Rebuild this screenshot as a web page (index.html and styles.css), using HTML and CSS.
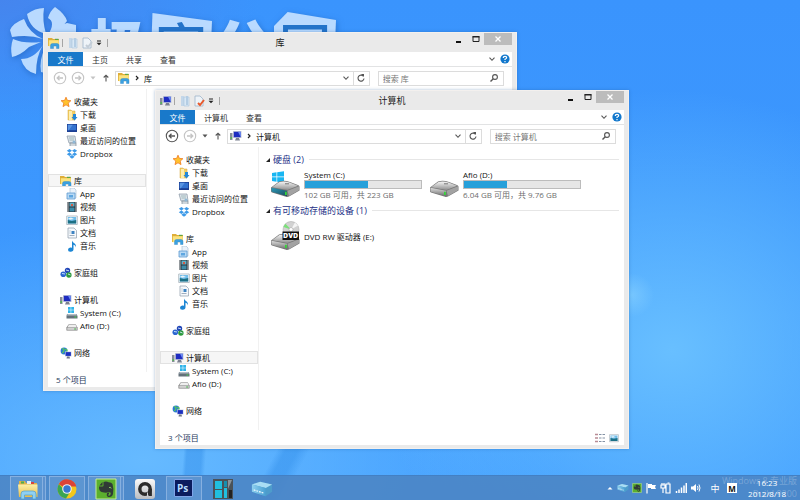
FILE: index.html
```html
<!DOCTYPE html>
<html lang="zh-CN">
<head>
<meta charset="utf-8">
<title>计算机</title>
<link rel="stylesheet" href="styles.css">
</head>
<body>
<svg class="sprite" aria-hidden="true">
  <defs>
    <linearGradient id="metal" x1="0" y1="0" x2="0" y2="1"><stop offset="0" stop-color="#f4f4f4"/><stop offset="1" stop-color="#8f8f8f"/></linearGradient>
    <linearGradient id="front" x1="0" y1="0" x2="0" y2="1"><stop offset="0" stop-color="#dcdcdc"/><stop offset="1" stop-color="#6d6d6d"/></linearGradient>
    <linearGradient id="teal" x1="0" y1="0" x2="1" y2="1"><stop offset="0" stop-color="#2b9ab8"/><stop offset="1" stop-color="#1d4a5c"/></linearGradient>
    <linearGradient id="gold" x1="0" y1="0" x2="0" y2="1"><stop offset="0" stop-color="#fdf0a8"/><stop offset="1" stop-color="#e8bd4a"/></linearGradient>
    <linearGradient id="silver" x1="0" y1="0" x2="0" y2="1"><stop offset="0" stop-color="#fafafa"/><stop offset="1" stop-color="#b9bcc0"/></linearGradient>
    <linearGradient id="box" x1="0" y1="0" x2="1" y2="0"><stop offset="0" stop-color="#8fd0ef"/><stop offset="1" stop-color="#4aa0d2"/></linearGradient>
  </defs>
  <symbol id="i-library" viewBox="0 0 12 12"><path d="M0 1h4l1 1h6v7H0z" fill="#dfae38"/><path d="M.8 3.200h10v6H.8z" fill="#fbe37e"/><path d="M7 1.800h3.500V3H7z" fill="#5fa544"/><path d="M2.500 11.500V8.500q0-2 2-2h4.500q2 0 2 2v3H8.500V9h-3v2.500z" fill="#3ba0e0" stroke="#2a86c4" stroke-width=".4"/></symbol>
  <symbol id="i-folder" viewBox="0 0 10 12"><path d="M1 1h3v10H1z" fill="#c3d7ea"/><path d="M4 2h5v9H4z" fill="#d9e8f5" stroke="#a9c3dc" stroke-width=".6"/><path d="M6 1h2v9H6z" fill="#b4cde4"/></symbol>
  <symbol id="i-props" viewBox="0 0 12 12"><path d="M2 1h5l3 3v7H2z" fill="#eef3f8" stroke="#9eb4c9" stroke-width=".8"/><path d="M5 8l2 2 4-5" fill="none" stroke="currentColor" stroke-width="2"/></symbol>
  <symbol id="i-pc" viewBox="0 0 12 12"><path d="M0 3h2.500v7H0z" fill="#888d99"/><path d="M.6 7h1.200v2H.6z" fill="#4bbf4b"/><path d="M3 1h8.500v7H3z" fill="#c5cad8"/><path d="M3.800 1.800h7v5.400h-7z" fill="#1e2cc0"/><path d="M8 1.800h2.800v5.400z" fill="#6f8ff2"/><path d="M6 8h3l1 2.500H5z" fill="#7b8090"/></symbol>
  <symbol id="i-star" viewBox="0 0 12 12"><path d="M6 1.200l1.400 3.200 3.500.3-2.700 2.400.8 3.500L6 8.800l-3 1.800.8-3.500-2.700-2.400 3.500-.3z" fill="#ffc22e" stroke="#ef7a1c" stroke-width=".8"/></symbol>
  <symbol id="i-download" viewBox="0 0 12 12"><path d="M2 1h3l1 1h3v9H2z" fill="#f3cf66" stroke="#d6a63b" stroke-width=".5"/><path d="M3 2h3v9H3z" fill="#fdeeb0"/><path d="M7 5h3v3h1.500L8.500 11.600 5.500 8H7z" fill="#2488d8"/></symbol>
  <symbol id="i-desktop" viewBox="0 0 12 12"><path d="M1 2h10v8H1z" fill="#1c3f93"/><path d="M1.800 2.800h8.400v5.400H1.800z" fill="#3473cf"/><path d="M1.800 2.800h5l-4 5.400h-1z" fill="#5a95e2"/></symbol>
  <symbol id="i-recent" viewBox="0 0 12 12"><path d="M1 1h8l1 7H3z" fill="#dde4ea" stroke="#8695a3" stroke-width=".7"/><path d="M3 3h5M3.500 5H8" stroke="#8aa" stroke-width=".7"/><path d="M4 11V8h6v3" fill="#d0d7dc" stroke="#7c8a97" stroke-width=".7"/><circle cx="8" cy="7" r="1.500" fill="#8fb8d6"/></symbol>
  <symbol id="i-dropbox" viewBox="0 0 12 12"><path d="M3.500 1L6 2.700 3.300 4.500.8 2.700zM8.500 1L6 2.700l2.700 1.800 2.500-1.800zM.8 6.300l2.500-1.800L6 6.300 3.500 8zM11.200 6.300L8.700 4.500 6 6.300 8.500 8zM3.300 8.700L6 7l2.700 1.700L6 10.800z" fill="#3d9ae8"/></symbol>
  <symbol id="i-app" viewBox="0 0 12 12"><path d="M4 0h4l2 2v8H4z" fill="#eaf2fa" stroke="#9db8d2" stroke-width=".6"/><path d="M1 5h8v6H1z" fill="#b8d9f4" stroke="#5d9bd0" stroke-width=".8"/><path d="M3 7h4v2.500H3z" fill="#5ea6e0"/></symbol>
  <symbol id="i-video" viewBox="0 0 12 12"><path d="M1.500 1h9v10h-9z" fill="#28323a"/><path d="M3.500 1.500h5v4h-5z" fill="#5fb0c8"/><path d="M3.500 6.500h5v4h-5z" fill="#3c8ba8"/><path d="M5 3h2v2H5z" fill="#d25b46"/><path d="M2.500 1.500v9M9.500 1.500v9" stroke="#dfe5e8" stroke-width=".8" stroke-dasharray="1 1"/></symbol>
  <symbol id="i-picture" viewBox="0 0 12 12"><path d="M.7 2h10.600v8.500H.7z" fill="#fff" stroke="#9aa7b2" stroke-width=".7"/><path d="M1.800 3h8.400v6.500H1.800z" fill="#71bdea"/><path d="M1.800 6l4 1 4.400-1v3.500H1.800z" fill="#1c7085"/><path d="M2 4.500l3-1 3 1.500-4 .8z" fill="#e8f5fb"/></symbol>
  <symbol id="i-doc" viewBox="0 0 12 12"><path d="M2 1h6l2.500 2.500V11H2z" fill="#f6f9fc" stroke="#8e9cab" stroke-width=".7"/><path d="M5.500 4h3v3h-3z" fill="#3d83c2"/><path d="M3.500 4h1M3.500 6h1M3.500 8.500h5" stroke="#7b8ea3" stroke-width=".7"/></symbol>
  <symbol id="i-music" viewBox="0 0 12 12"><path d="M6 .5c.5 2.500 4.500 2.500 4 7C9.500 5.500 8.500 4.800 7.500 4.700V9.300q0 2.200-2.800 2.400T2 9.800 4.300 7.500q1-.1 1.700.2V.5z" fill="#1c86d4"/></symbol>
  <symbol id="i-home" viewBox="0 0 12 12"><circle cx="7.500" cy="3.500" r="2.700" fill="#2347b8"/><circle cx="3.300" cy="7.300" r="2.800" fill="#2b66d0"/><circle cx="8.900" cy="8" r="2.700" fill="#2c9a3c"/><path d="M2 6.500l3 .5M6 3l3 .8M8 7l2.500 1" stroke="#d8ecff" stroke-width=".9"/></symbol>
  <symbol id="i-drivec" viewBox="0 0 12 12"><path d="M2 0h2.700v2.700H2zM5.200 0H8v2.700H5.200zM2 3.200h2.700v2.700H2zM5.200 3.200H8v2.700H5.200z" fill="#2fb4ea"/><path d="M1 7h9.500l1 2v2.500H.5V9z" fill="#64717a"/><path d="M1.500 7h8.800l.7 1.500H1z" fill="#b4bec5"/><path d="M8.500 9.500h1.800v1H8.500z" fill="#48dd4c"/></symbol>
  <symbol id="i-drived" viewBox="0 0 12 12"><path d="M2.500 4.500h7.300l1.700 3v3H.5v-3z" fill="#777"/><path d="M2.700 5h7l1.300 2.500H1.200z" fill="#efefef"/><path d="M1.200 8h9.600v1.900H1.200z" fill="#d2d2d2"/><path d="M8.200 8.500H10v1H8.200z" fill="#43b548"/></symbol>
  <symbol id="i-net" viewBox="0 0 12 12"><circle cx="4" cy="4" r="3.400" fill="#2c79d4"/><path d="M2 2q2-1 2 1T2 6M5 2l2 1-1 3" stroke="#55c75b" stroke-width="1.300" fill="none"/><path d="M5 4.500h6.500v5H5z" fill="#ccd3e2"/><path d="M5.600 5.100h5.300v3.800H5.600z" fill="#1b2fc0"/><path d="M7 9.500h2.500l.5 2H6.500z" fill="#717888"/></symbol>
  <symbol id="i-hdd" viewBox="0 0 30 18"><path d="M9 1.500Q14 0 20 2l8.500 3.200q1 .5 1 1.500v3.800L19 16.500q-1.500.8-3 .3L2 12.500Q1 12 1 11V7.500z" fill="#777"/><path d="M9.500 2q5-1.200 10 .6L28 5.700 17.500 10 2 7.200z" fill="url(#metal)"/><path d="M1.500 7.800L17 10.700v5.500L2.500 12q-1-.4-1-1.300z" fill="var(--face, url(#front))"/><path d="M17.500 10.700L29 6.300v3.900l-10 5.700z" fill="#a2a2a2"/><path d="M15 11.800h1.800V15H15z" fill="#35d339"/><path d="M15 3.300h4v1h-4z" fill="#777"/></symbol>
  <symbol id="i-close" viewBox="0 0 8 8"><path d="M1.500 1.500l5 5M6.500 1.500l-5 5" stroke="#fff" stroke-width="1.300"/></symbol>
  <symbol id="i-min" viewBox="0 0 8 8"><path d="M1 6h5v2H1z" fill="#111"/></symbol>
  <symbol id="i-max" viewBox="0 0 8 8"><path d="M1 1.500h6v5H1z" fill="none" stroke="#222"/><path d="M.5 1h7v1.500h-7z" fill="#222"/></symbol>
  <symbol id="i-chev" viewBox="0 0 8 8"><path d="M1.500 2.700L4 5.300l2.500-2.600" fill="none" stroke="#555" stroke-width="1.100"/></symbol>
  <symbol id="i-caret" viewBox="0 0 8 8"><path d="M1.500 2.500h5L4 5.500z" fill="currentColor"/></symbol>
  <symbol id="i-qat" viewBox="0 0 8 8"><path d="M2 2h4" stroke="#222"/><path d="M1.500 3.800h5L4 6.300z" fill="#222"/></symbol>
  <symbol id="i-right" viewBox="0 0 8 8"><path d="M3 2l2 2-2 2" fill="none" stroke="#222" stroke-width="1.200"/></symbol>
  <symbol id="i-help" viewBox="0 0 10 10"><circle cx="5" cy="5" r="4.600" fill="#1177cc"/><path d="M3.300 4Q3.300 2.300 5 2.300T6.700 3.800Q6.700 4.600 5 5.200V6M5 7v1.200" fill="none" stroke="#fff" stroke-width="1.200"/></symbol>
  <symbol id="i-back" viewBox="0 0 14 14"><circle cx="7" cy="7" r="5.700" fill="none" stroke="currentColor" stroke-width="1.100"/><path d="M10 7H4.500M6.500 4.700L4.200 7l2.300 2.300" fill="none" stroke="currentColor" stroke-width="1.300"/></symbol>
  <symbol id="i-fwd" viewBox="0 0 14 14"><circle cx="7" cy="7" r="5.700" fill="none" stroke="currentColor" stroke-width="1.100"/><path d="M4 7h5.500M7.500 4.700L9.800 7 7.500 9.300" fill="none" stroke="currentColor" stroke-width="1.300"/></symbol>
  <symbol id="i-up" viewBox="0 0 8 10"><path d="M4 8.500V2.200M1.700 4.500L4 2.200l2.300 2.300" fill="none" stroke="#555" stroke-width="1.100"/></symbol>
  <symbol id="i-refresh" viewBox="0 0 10 10"><path d="M7.300 3.200A3 3 0 1 0 8 5.500" fill="none" stroke="#555" stroke-width="1.100"/><path d="M5 1h3v3z" fill="#555"/></symbol>
  <symbol id="i-search" viewBox="0 0 10 10"><circle cx="6" cy="4" r="2.400" fill="none" stroke="#555" stroke-width="1.100"/><path d="M4.300 5.700L1.500 8.500" stroke="#555" stroke-width="1.400"/></symbol>
  <symbol id="i-open" viewBox="0 0 6 6"><path d="M5 1v4H1z" fill="#222"/></symbol>
  <symbol id="i-box" viewBox="0 0 24 18"><path d="M1 4l9-3 13 3v8l-7 5L1 12z" fill="#4d9ccb"/><path d="M1 4l9-3 13 3-7 4z" fill="#a9ddf4"/><path d="M1 4l15 4v9L1 12z" fill="url(#box)"/><path d="M3 10l11 3.500" stroke="#f3fbff" stroke-width="1.300" stroke-dasharray="2 1"/></symbol>
  <symbol id="i-ever" viewBox="0 0 22 22"><path d="M1 1h20v20H1z" fill="#5bb02e" stroke="#c8ea9c"/><path d="M4 8.500h3.500q1 0 1-1V4q3-1 5 .3 3-.1 4 1.700 1.500 5 .5 10-.7 3-3.500 3-2.800 0-2.800-2.300T14 14.500v1.700q-1 0-1 .8t1.200.8q1.500 0 1.600-3l-2.300-.8q-1.500 1-4.500.5T5 13Q3.700 11 4 8.500z" fill="#303b36"/><path d="M4.300 7.500h3.200V4z" fill="#303b36"/><path d="M14 9.500q2-.8 2.200 1" stroke="#8bcf60" fill="none"/></symbol>
</svg>

<div class="desktop">
  <main class="canvas">
    <div class="brand">
      <svg class="pinwheel" viewBox="0 0 74 72" aria-hidden="true"><g fill="#b9daff">
        <path d="M18 8Q26 2 35 2 33 14 37 28 21 24 18 8z"/>
        <path d="M46 1Q56 8 58 15 52 24 39 29 47 16 39 12 41 5 46 1z"/>
        <path d="M40 31Q48 19 58 17L67 19V32H44z"/>
        <path d="M15 13Q4 17 1 24L3 31Q20 28 34 33 20 27 15 13z"/>
        <path d="M4 33Q1 41 3 51 12 49 20 41L32 36Q15 38 4 33z"/>
        <path d="M12 53Q25 53 34 39 27 50 27 68 15 65 12 53z"/>
        <path d="M36 42Q30 54 32 66L40 68V42z"/>
      </g></svg>
      <div class="brand-name"><span>极</span><span class="plate">客</span><span>公</span><span class="plate peak">园</span></div>
    </div>

    <section class="window window-lib" aria-label="库">
      <header class="titlebar">
        <div class="quick">
          <svg class="ic12"><use href="#i-library"/></svg><i class="sep"></i>
          <button type="button" aria-label="新建文件夹"><svg class="ic12"><use href="#i-folder"/></svg></button>
          <button type="button" aria-label="属性" class="muted"><svg class="ic12"><use href="#i-props"/></svg></button>
          <button type="button" aria-label="自定义"><svg class="ic8"><use href="#i-qat"/></svg></button><i class="sep"></i>
        </div>
        <h1>库</h1>
        <div class="controls">
          <button type="button" aria-label="最小化"><svg class="ic8"><use href="#i-min"/></svg></button>
          <button type="button" aria-label="最大化"><svg class="ic8"><use href="#i-max"/></svg></button>
          <button type="button" aria-label="关闭" class="close"><svg class="ic8"><use href="#i-close"/></svg></button>
        </div>
      </header>
      <div class="client">
        <nav class="ribbon">
          <button type="button" class="file">文件</button><button type="button">主页</button><button type="button">共享</button><button type="button">查看</button>
          <span class="grow"></span>
          <button type="button" class="bare" aria-label="展开功能区"><svg class="ic8"><use href="#i-chev"/></svg></button>
          <button type="button" class="bare" aria-label="帮助"><svg class="ic10"><use href="#i-help"/></svg></button>
        </nav>
        <div class="navbar">
          <button type="button" class="dim" aria-label="后退"><svg class="ic14"><use href="#i-back"/></svg></button>
          <button type="button" class="dim" aria-label="前进"><svg class="ic14"><use href="#i-fwd"/></svg></button>
          <button type="button" class="dim" aria-label="历史"><svg class="ic8"><use href="#i-caret"/></svg></button>
          <button type="button" aria-label="向上"><svg class="ic10"><use href="#i-up"/></svg></button>
          <div class="address">
            <svg class="ic12"><use href="#i-library"/></svg><svg class="ic8"><use href="#i-right"/></svg><a href="#">库</a>
            <span class="grow"></span>
            <button type="button" aria-label="下拉"><svg class="ic8"><use href="#i-chev"/></svg></button>
            <button type="button" class="refresh" aria-label="刷新"><svg class="ic10"><use href="#i-refresh"/></svg></button>
          </div>
          <label class="search"><input type="text" placeholder="搜索 库" aria-label="搜索 库"><svg class="ic10"><use href="#i-search"/></svg></label>
        </div>
        <div class="body">
          <nav class="tree">
            <ul>
              <li><a href="#"><svg class="ic12"><use href="#i-star"/></svg>收藏夹</a>
                <ul>
                  <li><a href="#"><svg class="ic12"><use href="#i-download"/></svg>下载</a></li>
                  <li><a href="#"><svg class="ic12"><use href="#i-desktop"/></svg>桌面</a></li>
                  <li><a href="#"><svg class="ic12"><use href="#i-recent"/></svg>最近访问的位置</a></li>
                  <li><a href="#"><svg class="ic12"><use href="#i-dropbox"/></svg>Dropbox</a></li>
                </ul></li>
              <li><a href="#" class="selected"><svg class="ic12"><use href="#i-library"/></svg>库</a>
                <ul>
                  <li><a href="#"><svg class="ic12"><use href="#i-app"/></svg>App</a></li>
                  <li><a href="#"><svg class="ic12"><use href="#i-video"/></svg>视频</a></li>
                  <li><a href="#"><svg class="ic12"><use href="#i-picture"/></svg>图片</a></li>
                  <li><a href="#"><svg class="ic12"><use href="#i-doc"/></svg>文档</a></li>
                  <li><a href="#"><svg class="ic12"><use href="#i-music"/></svg>音乐</a></li>
                </ul></li>
              <li><a href="#"><svg class="ic12"><use href="#i-home"/></svg>家庭组</a></li>
              <li><a href="#"><svg class="ic12"><use href="#i-pc"/></svg>计算机</a>
                <ul>
                  <li><a href="#"><svg class="ic12"><use href="#i-drivec"/></svg>System (C:)</a></li>
                  <li><a href="#"><svg class="ic12"><use href="#i-drived"/></svg>Afio (D:)</a></li>
                </ul></li>
              <li><a href="#"><svg class="ic12"><use href="#i-net"/></svg>网络</a></li>
            </ul>
          </nav>
          <div class="content"></div>
        </div>
        <footer class="status"><span>5 个项目</span></footer>
      </div>
    </section>

    <section class="window window-pc" aria-label="计算机">
      <header class="titlebar">
        <div class="quick">
          <svg class="ic12"><use href="#i-pc"/></svg><i class="sep"></i>
          <button type="button" aria-label="新建文件夹"><svg class="ic12"><use href="#i-folder"/></svg></button>
          <button type="button" aria-label="属性" class="check"><svg class="ic12"><use href="#i-props"/></svg></button>
          <button type="button" aria-label="自定义"><svg class="ic8"><use href="#i-qat"/></svg></button><i class="sep"></i>
        </div>
        <h1>计算机</h1>
        <div class="controls">
          <button type="button" aria-label="最小化"><svg class="ic8"><use href="#i-min"/></svg></button>
          <button type="button" aria-label="最大化"><svg class="ic8"><use href="#i-max"/></svg></button>
          <button type="button" aria-label="关闭" class="close"><svg class="ic8"><use href="#i-close"/></svg></button>
        </div>
      </header>
      <div class="client">
        <nav class="ribbon">
          <button type="button" class="file">文件</button><button type="button">计算机</button><button type="button">查看</button>
          <span class="grow"></span>
          <button type="button" class="bare" aria-label="展开功能区"><svg class="ic8"><use href="#i-chev"/></svg></button>
          <button type="button" class="bare" aria-label="帮助"><svg class="ic10"><use href="#i-help"/></svg></button>
        </nav>
        <div class="navbar">
          <button type="button" aria-label="后退"><svg class="ic14"><use href="#i-back"/></svg></button>
          <button type="button" class="dim" aria-label="前进"><svg class="ic14"><use href="#i-fwd"/></svg></button>
          <button type="button" aria-label="历史"><svg class="ic8"><use href="#i-caret"/></svg></button>
          <button type="button" aria-label="向上"><svg class="ic10"><use href="#i-up"/></svg></button>
          <div class="address">
            <svg class="ic12"><use href="#i-pc"/></svg><svg class="ic8"><use href="#i-right"/></svg><a href="#">计算机</a>
            <span class="grow"></span>
            <button type="button" aria-label="下拉"><svg class="ic8"><use href="#i-chev"/></svg></button>
            <button type="button" class="refresh" aria-label="刷新"><svg class="ic10"><use href="#i-refresh"/></svg></button>
          </div>
          <label class="search"><input type="text" placeholder="搜索 计算机" aria-label="搜索 计算机"><svg class="ic10"><use href="#i-search"/></svg></label>
        </div>
        <div class="body">
          <nav class="tree">
            <ul>
              <li><a href="#"><svg class="ic12"><use href="#i-star"/></svg>收藏夹</a>
                <ul>
                  <li><a href="#"><svg class="ic12"><use href="#i-download"/></svg>下载</a></li>
                  <li><a href="#"><svg class="ic12"><use href="#i-desktop"/></svg>桌面</a></li>
                  <li><a href="#"><svg class="ic12"><use href="#i-recent"/></svg>最近访问的位置</a></li>
                  <li><a href="#"><svg class="ic12"><use href="#i-dropbox"/></svg>Dropbox</a></li>
                </ul></li>
              <li><a href="#"><svg class="ic12"><use href="#i-library"/></svg>库</a>
                <ul>
                  <li><a href="#"><svg class="ic12"><use href="#i-app"/></svg>App</a></li>
                  <li><a href="#"><svg class="ic12"><use href="#i-video"/></svg>视频</a></li>
                  <li><a href="#"><svg class="ic12"><use href="#i-picture"/></svg>图片</a></li>
                  <li><a href="#"><svg class="ic12"><use href="#i-doc"/></svg>文档</a></li>
                  <li><a href="#"><svg class="ic12"><use href="#i-music"/></svg>音乐</a></li>
                </ul></li>
              <li><a href="#"><svg class="ic12"><use href="#i-home"/></svg>家庭组</a></li>
              <li><a href="#" class="selected"><svg class="ic12"><use href="#i-pc"/></svg>计算机</a>
                <ul>
                  <li><a href="#"><svg class="ic12"><use href="#i-drivec"/></svg>System (C:)</a></li>
                  <li><a href="#"><svg class="ic12"><use href="#i-drived"/></svg>Afio (D:)</a></li>
                </ul></li>
              <li><a href="#"><svg class="ic12"><use href="#i-net"/></svg>网络</a></li>
            </ul>
          </nav>
          <div class="content">
            <h2><svg class="ic6"><use href="#i-open"/></svg>硬盘 (2)</h2>
            <div class="tiles">
              <div class="tile">
                <svg class="drive system" viewBox="0 0 30 30"><path d="M2 3l4.500-.7v4.200H2zM7.200 2.200L14 1.200v5.300H7.200zM2 7.300h4.500v4.400L2 11zM7.200 7.300H14v5.400l-6.800-.9z" fill="#18b6f2"/><use href="#i-hdd" y="10" width="30" height="18"/></svg>
                <div class="info"><p>System (C:)</p><div class="meter"><div style="width:54%"></div></div><p class="free">102 GB 可用，共 223 GB</p></div>
              </div>
              <div class="tile">
                <svg class="drive" viewBox="0 0 30 30"><use href="#i-hdd" y="10" width="30" height="18"/></svg>
                <div class="info"><p>Afio (D:)</p><div class="meter"><div style="width:37%"></div></div><p class="free">6.04 GB 可用，共 9.76 GB</p></div>
              </div>
            </div>
            <h2><svg class="ic6"><use href="#i-open"/></svg>有可移动存储的设备 (1)</h2>
            <div class="tiles">
              <div class="tile optical">
                <svg class="drive" viewBox="0 0 30 30"><circle cx="21" cy="8.500" r="8" fill="#d2d2d2" stroke="#a5a5a5" stroke-width=".5"/><path d="M21 8.500L13.500 6A8 8 0 0 1 15.500 2.700z" fill="#7be07a"/><path d="M21 8.500l4-7 3 3z" fill="#f5f5f5"/><circle cx="21" cy="8.500" r="2" fill="#fff" stroke="#999" stroke-width=".5"/><use href="#i-hdd" y="12" width="30" height="18"/><path d="M12.500 10.500H29V19H12.500z" fill="#111"/><text x="13" y="17.200" class="disc">DVD</text></svg>
                <div class="info"><p>DVD RW 驱动器 (E:)</p></div>
              </div>
            </div>
          </div>
        </div>
        <footer class="status"><span>3 个项目</span>
          <div class="views">
            <button type="button" aria-label="详细信息"><svg class="ic10" viewBox="0 0 10 10"><path d="M0 1.500h3M0 5h3M0 8.500h3" stroke="#b98c95" stroke-width="1.600"/><path d="M4 1.500h6M4 5h6M4 8.500h6" stroke="#8593a6" stroke-width="1.200" stroke-dasharray="2.500 1"/></svg></button>
            <button type="button" aria-label="大图标"><svg class="ic10"><use href="#i-picture"/></svg></button>
          </div>
        </footer>
      </div>
    </section>
  </main>

  <footer class="taskbar">
    <div class="apps">
      <button type="button" class="running stacked" aria-label="文件资源管理器"><svg class="app" viewBox="0 0 22 22"><path d="M2 3h6l1 2h11v14H2z" fill="#dfb24a"/><path d="M4 3.500h3v2H4z" fill="#4bae51"/><path d="M10 3h4v3h-4z" fill="#e8eef2"/><path d="M14 4h3v2h-3z" fill="#d8453e"/><path d="M1 6.500h19.500v12.500H2z" fill="url(#gold)"/><path d="M4 21v-5q0-3 3-3h9q3 0 3 3v5h-3.500v-4h-8v4z" fill="#8fd0f2" stroke="#4f9ecb" stroke-width=".7"/></svg></button>
      <button type="button" class="running" aria-label="Chrome"><svg class="app" viewBox="0 0 22 22"><circle cx="11" cy="11" r="9.500" fill="#f2c71d"/><path d="M11 11L2.800 6.200A9.500 9.500 0 0 1 20.300 8.500H11z" fill="#dc4337"/><path d="M2.800 6.200A9.500 9.500 0 0 0 10 20.500l4-6.500-3 .5z" fill="#3ba552"/><circle cx="11" cy="11" r="4.800" fill="#f4f4f4"/><circle cx="11" cy="11" r="3.700" fill="#3777d0"/></svg></button>
      <button type="button" class="running stacked" aria-label="Evernote"><svg class="app"><use href="#i-ever"/></svg></button>
      <button type="button" aria-label="启动器"><svg class="app" viewBox="0 0 22 22"><rect x="1" y="1" width="20" height="20" rx="3" fill="url(#silver)"/><circle cx="11" cy="11" r="5.200" fill="none" stroke="#2b2b2b" stroke-width="3.400"/><path d="M14.500 11h3.400v7h-3.400z" fill="#2b2b2b"/><path d="M13.500 14.500v4" stroke="#d0d2d5"/></svg></button>
      <button type="button" class="running" aria-label="Photoshop"><svg class="app" viewBox="0 0 22 22"><path d="M1.500 1.500h18v17h-18z" fill="#0b1c5e" stroke="#7fa4e8"/><text x="4" y="14" class="ps">Ps</text></svg></button>
      <button type="button" aria-label="面板"><svg class="app" viewBox="0 0 22 22"><path d="M1 1h20v20H1z" fill="#4a5259"/><path d="M3 3h7v8H3zM3 12h7v8H3zM12 10h3v10h-3z" fill="#20bfe0"/><path d="M12 3h3v6h-3z" fill="#168fae"/><path d="M16 2h4l-4 9z" fill="#8a939a"/><path d="M17 12h3v8h-3z" fill="#222"/></svg></button>
      <button type="button" aria-label="驱动器"><svg class="app" viewBox="0 0 24 22"><use href="#i-box" y="2" width="24" height="18"/></svg></button>
    </div>
    <div class="tray">
      <button type="button" aria-label="显示隐藏的图标"><svg class="ic8" viewBox="0 0 8 8"><path d="M1.500 5.500h5L4 3z" fill="#fff"/></svg></button>
      <button type="button" aria-label="磁盘"><svg class="ic12"><use href="#i-box"/></svg></button>
      <button type="button" aria-label="Evernote"><svg class="ic10"><use href="#i-ever"/></svg></button>
      <button type="button" aria-label="操作中心"><svg class="ic12" viewBox="0 0 12 12"><path d="M2 1v10.500" stroke="#fff" stroke-width="1.200"/><path d="M3 2h4v1h4l-1 2 1 2H6V6H3z" fill="#fff"/></svg></button>
      <button type="button" aria-label="移除硬件"><svg class="ic12" viewBox="0 0 12 12"><path d="M1 3h4v3H1zM2 1v2M4 1v2M3 6v5M6 2h4v9H6z" fill="none" stroke="#fff" stroke-width="1.200"/><path d="M7.500 1h2" stroke="#fff"/></svg></button>
      <button type="button" aria-label="网络"><svg class="ic12" viewBox="0 0 12 12"><path d="M1.500 9v2M4 7.500V11M6.500 5.500V11M9 3.500V11M11.300 1v10" stroke="#fff" stroke-width="1.500"/></svg></button>
      <button type="button" aria-label="音量"><svg class="ic12" viewBox="0 0 12 12"><path d="M1 4.500h2L6 2v8L3 7.500H1z" fill="#fff"/><path d="M7.500 4q1 2 0 4M9 2.500q2 3.500 0 7" fill="none" stroke="#fff"/></svg></button>
      <button type="button" class="ime">中</button>
      <button type="button" class="mode">M</button>
      <time class="clock" datetime="2012-08-18T16:23"><span>16:23</span><span>2012/8/18</span></time>
    </div>
  </footer>
  <p class="edition">Windows 8 专业版<br>Build 9200</p>
</div>
</body>
</html>
```
FILE: styles.css
```css
* { box-sizing: border-box; }
body, h1, h2, p, ul { margin: 0; padding: 0; font-weight: normal; }
body {
  font-family: "Open Sans", "Noto Sans CJK SC", sans-serif;
  font-size: 8px;
  line-height: 13px;
  color: #111;
}
ul { list-style: none; }
a { color: inherit; text-decoration: none; }
button {
  display: flex;
  align-items: center;
  justify-content: center;
  padding: 0;
  border: 0;
  background: none;
  color: inherit;
  font: inherit;
}
svg { display: block; flex: none; }
.sprite { position: absolute; width: 0; height: 0; }
.ic6 { width: 6px; height: 6px; }
.ic8 { width: 8px; height: 8px; }
.ic10 { width: 10px; height: 10px; }
.ic12 { width: 12px; height: 12px; }
.ic14 { width: 14px; height: 14px; }
.grow { flex: 1; }

.desktop {
  position: relative;
  display: flex;
  flex-direction: column;
  min-height: 100vh;
  overflow: hidden;
  background:
    radial-gradient(circle at 79% 59%, #8fd6ff80 0, #8fd6ff00 22px),
    linear-gradient(94deg, #2f8ce800 30%, #2f8ce870 36% 60%, #2f8ce800 68%) 166px 100% / 56px 56px no-repeat,
    linear-gradient(118deg, #2f8ce800 40%, #2f8ce870 46% 54%, #2f8ce800 62%) 220px 100% / 120px 56px no-repeat,
    radial-gradient(ellipse 300px 260px at 84% 70%, #68bfff 0, #68bfff00 100%),
    radial-gradient(ellipse 420px 240px at 18% 92%, #66baff 0, #66baff00 100%),
    radial-gradient(ellipse 260px 120px at 0 0, #4585ee 0, #4585ee00 100%),
    linear-gradient(#3a94fd, #3f9cff);
}
.canvas { position: relative; flex: 1; }

.brand {
  position: absolute;
  top: 6px;
  left: 9px;
  display: flex;
  gap: 5px;
  filter: drop-shadow(1px 2px 3px #1c5fb8a0);
}
.pinwheel { width: 74px; height: 72px; }
.brand-name {
  display: flex;
  font-size: 60px;
  font-weight: 900;
  line-height: 66px;
  color: #b9daff;
}
.brand-name span { width: 62px; padding-top: 8px; text-align: center; }
.brand-name .plate {
  font-size: 52px;
  font-weight: 500;
  color: #2373c9;
  background: #b9daff;
  clip-path: polygon(4% 7px, 100% 15px, 96% 100%, 0 100%);
}
.brand-name .peak { clip-path: polygon(22% 6px, 100% 14px, 96% 100%, 0 100%, 0 20px); }

.window {
  position: absolute;
  padding: 0 4px 3px;
  border: 1px solid #f3f0ee;
  background: #eaeaea;
  box-shadow: 0 0 3px #1a4f9060;
}
.window-lib { top: 32px; left: 43px; right: 283px; }
.window-pc { top: 90px; left: 155px; right: 171px; }

.titlebar {
  display: grid;
  grid-template-columns: 1fr auto 1fr;
  height: 19px;
  color: #222;
}
.titlebar h1 { font-size: 9px; line-height: 19px; }
.quick { display: flex; align-items: center; gap: 2px; }
.sep { width: 1px; height: 8px; margin-right: 2px; background: #a5a5a5; }
.quick .sep:last-child { margin-left: 2px; }
.muted { color: #c3cdd7; }
.check { color: #e8592b; }
.controls { display: flex; justify-content: flex-end; align-items: flex-start; }
.controls button { width: 17px; height: 12px; }
.controls .close { width: 28px; background: #bcbcbc; }

.client { background: #fff; }
.ribbon {
  display: flex;
  height: 15px;
  border-bottom: 1px solid #e2e3e4;
  color: #333;
}
.ribbon button { padding: 0 9px; }
.ribbon .file { width: 35px; background: #1979ca; color: #fff; }
.ribbon .bare { padding: 0 2px; }
.navbar {
  display: flex;
  align-items: center;
  gap: 4px;
  height: 22px;
  padding: 0 8px 0 5px;
  color: #555;
}
.dim { color: #c4c4c4; }
.address, .search {
  display: flex;
  align-items: center;
  height: 15px;
  border: 1px solid #dcdcdc;
}
.address { flex: 1; gap: 3px; padding-left: 2px; margin-right: 4px; color: #111; }
.address .refresh { width: 16px; height: 13px; border-left: 1px solid #dcdcdc; }
.search { flex: 0 0 28%; min-width: 0; padding: 0 4px; }
.search input {
  flex: 1;
  min-width: 0;
  padding: 0;
  border: 0;
  background: none;
  font: inherit;
}
.search input::placeholder { color: #777; }

.body { display: flex; }
.tree {
  width: 99px;
  padding: 6px 0 13px;
  border-right: 1px solid #f1f1f1;
}
.tree > ul { display: grid; gap: 14px; }
.tree a {
  display: flex;
  align-items: center;
  gap: 2px;
  height: 13px;
  padding-left: 12px;
  white-space: nowrap;
}
.tree ul ul a { padding-left: 18px; }
.tree .selected { background: #f6f6f6; outline: 1px solid #e2e2e2; outline-offset: -1px; }

.content { flex: 1; padding: 6px 5px 0 6px; }
.content h2 {
  display: flex;
  align-items: center;
  gap: 2px;
  font-size: 9px;
  line-height: 13px;
  color: #1e3287;
}
.content h2::after { content: ""; flex: 1; height: 1px; margin-left: 3px; background: #e6e6e6; }
.tiles {
  display: grid;
  grid-template-columns: repeat(auto-fill, 152px);
  gap: 7px;
  padding: 3px 0 4px 5px;
}
.tile { display: flex; align-items: center; gap: 4px; line-height: 11px; }
.optical { height: 32px; }
.drive { width: 30px; height: 30px; }
.system { --face: url(#teal); }
.info { flex: 1; white-space: nowrap; }
.meter { height: 9px; border: 1px solid #bcbcbc; background: #e6e6e6; }
.meter div { height: 7px; background: #26a0da; }
.free { color: #6d6d6d; }
.disc { font: 800 7px "Open Sans", sans-serif; fill: #fff; }

.status {
  display: flex;
  align-items: center;
  justify-content: space-between;
  height: 15px;
  padding: 0 5px 0 8px;
  color: #1e395b;
}
.views { display: flex; gap: 4px; }

.taskbar {
  display: flex;
  justify-content: space-between;
  height: 25px;
  padding: 0 14px 0 10px;
  border-top: 1px solid #4380c4;
  background: #4b84c4e0;
  color: #fff;
}
.apps { display: flex; gap: 3px; }
.apps button { width: 36px; height: 25px; }
.apps .running { border: 1px solid #86b0e0; border-bottom: 0; background: #6c9fd880; }
.apps .stacked { box-shadow: inset -2px 0 #5d92cf, inset -3px 0 #86b0e0; }
.app { width: 22px; height: 22px; }
.ps { font: 700 10px "Open Sans", sans-serif; fill: #b8dcff; }
.tray { display: flex; align-items: center; gap: 3px; }
.tray .ime { width: 12px; margin-left: 4px; font-size: 9px; }
.tray .mode {
  width: 10px;
  height: 10px;
  margin: 0 8px 0 3px;
  background: #fff;
  color: #111;
  font-weight: 700;
}
.clock { display: grid; text-align: center; line-height: 11px; }
.edition {
  position: absolute;
  right: 3px;
  bottom: 0;
  font-size: 9px;
  line-height: 13px;
  text-align: right;
  color: #ffffff40;
  pointer-events: none;
}
```
